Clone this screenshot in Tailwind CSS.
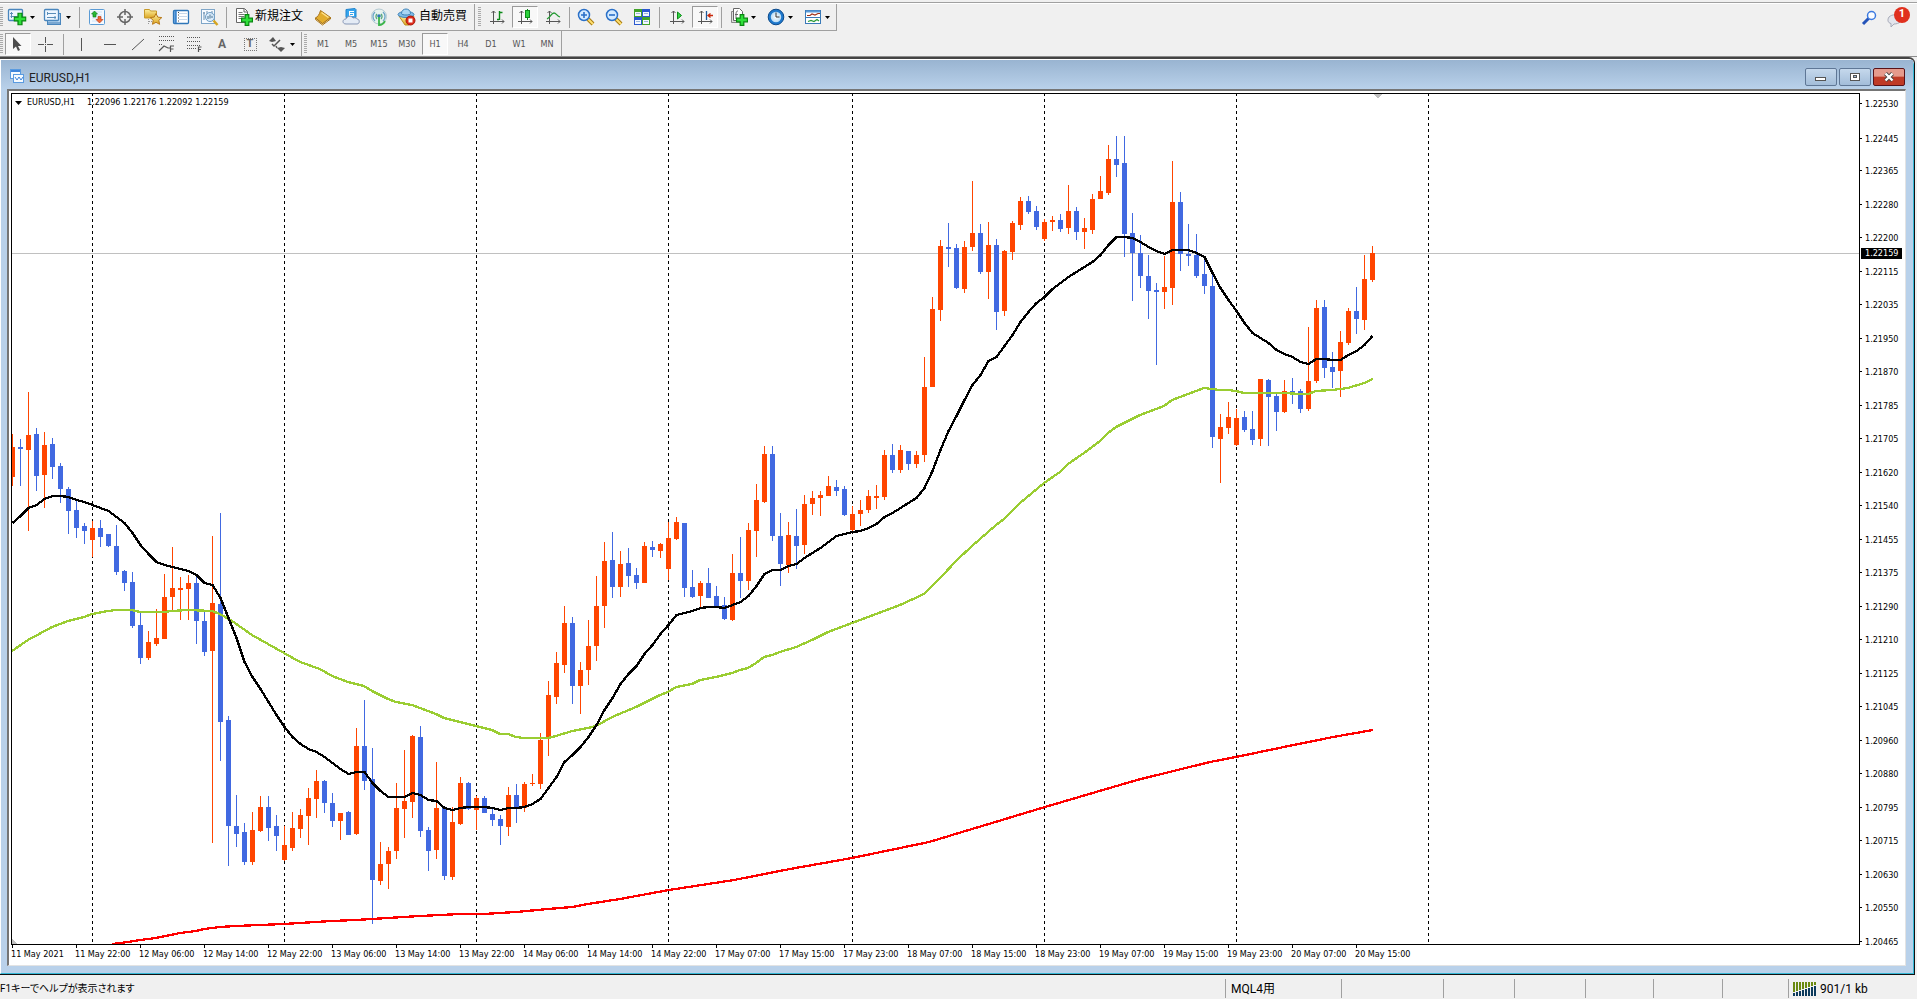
<!DOCTYPE html>
<html lang="ja">
<head>
<meta charset="utf-8">
<title>EURUSD,H1</title>
<script src="https://cdn.jsdelivr.net/npm/@tailwindcss/browser@4"></script>
</head>
<body class="flex h-screen flex-col overflow-hidden bg-[#f0f0f0] font-['Roboto','Noto_Sans_CJK_JP',sans-serif] text-xs text-black">

<svg class="absolute size-0" aria-hidden="true">
  <defs>
    <linearGradient id="gold" x1="0" y1="0" x2="0" y2="1"><stop offset="0" stop-color="#fdf0a0"/><stop offset="1" stop-color="#dca520"/></linearGradient>
    <radialGradient id="clock"><stop offset="0" stop-color="#ffffff"/><stop offset="1" stop-color="#a8d4f4"/></radialGradient>
    <symbol id="plus" viewBox="0 0 10 10"><path d="M3.5.5h3v3h3v3h-3v3h-3v-3h-3v-3h3z" fill="#2fe03a" stroke="#07870f"/></symbol>
    <symbol id="axes" viewBox="0 0 20 20"><path d="M6.500 4v13M3 14.500h14M4.500 6l2-2 2 2M15 12.500l2 2-2 2" fill="none" stroke="#555"/></symbol>
    <symbol id="lens" viewBox="0 0 20 20"><path d="M12 12l5 5" stroke="#a87a10" stroke-width="4"/><path d="M12 12l5 5" stroke="#ffe070" stroke-width="2"/><circle cx="8" cy="8" r="5.500" fill="#d5ebff" stroke="#2a70c8" stroke-width="1.500"/></symbol>
  </defs>
</svg>

<header class="border-b border-[#8c8c8c]">
  <div class="h-1 border-b border-white"><div class="h-[3px] border-b border-[#a0a0a0]"></div></div>
  <div class="flex items-stretch justify-between">
    <div class="flex h-[27px] border-b border-[#a0a0a0] bg-[#f0f0f0]" role="toolbar" aria-label="標準">
      <div class="flex w-[475px] items-center border-r border-[#a0a0a0]">
        <i class="mr-px h-[20px] w-[3px] bg-[repeating-linear-gradient(#aaa_0_1px,transparent_1px_2px)]"></i>
        <button class="flex h-6 w-9 items-center gap-[3px] pl-[3px]" aria-label="新規チャート">
          <svg class="size-5" viewBox="0 0 20 20"><rect x="1.500" y="2.500" width="14" height="11" rx="1" fill="#eef6ff" stroke="#4a86bd" stroke-width="1.300"/><path d="M4.500 5v6M3 6.500h3M3.500 9.500h7" stroke="#5a8db8" fill="none"/><use href="#plus" x="6.500" y="5.500" width="13" height="13"/></svg>
          <svg class="w-[5px]" viewBox="0 0 5 3"><path d="M0 0h5L2.500 3z"/></svg>
        </button>
        <button class="flex h-6 w-9 items-center gap-[3px] pl-[3px]" aria-label="プロファイル">
          <svg class="size-5" viewBox="0 0 20 20"><rect x="4.500" y="6.500" width="13" height="11" fill="#b6d6f2" stroke="#4a86bd"/><rect x="1.500" y="2.500" width="14" height="11" rx="1" fill="#eef6ff" stroke="#4a86bd" stroke-width="1.300"/><path d="M4.500 5v3M4 6.500h9M12 9v3M4 10.500h9" stroke="#5a8db8" fill="none"/><path d="M5 16h12" stroke="#3f79b0"/></svg>
          <svg class="w-[5px]" viewBox="0 0 5 3"><path d="M0 0h5L2.500 3z"/></svg>
        </button>
        <i class="mx-[3px] h-[21px] w-px bg-[#a0a0a0]"></i>
        <button class="flex h-6 w-7 items-center justify-center" aria-label="気配値">
          <svg class="size-5" viewBox="0 0 20 20"><rect x="2.500" y="2.500" width="15" height="15" rx="1" fill="#f4f9ff" stroke="#5b9bd5"/><path d="M5 5h10M5 8h10M5 11h10M5 14h10" stroke="#cfe2f5"/><path d="M7.500 4l3 3H9v3H6V7H4.500z" fill="#27b834" stroke="#0c7a17" stroke-width=".6"/><path d="M12.500 16L9 12.500h2v-3h3v3h2z" fill="#f26a3a" stroke="#b5300c" stroke-width=".6"/></svg>
        </button>
        <button class="flex h-6 w-7 items-center justify-center" aria-label="データウィンドウ">
          <svg class="size-5" viewBox="0 0 20 20"><circle cx="10" cy="10" r="5.500" fill="none" stroke="#666" stroke-width="1.500"/><path d="M10 2v6M10 12v6M2 10h6M12 10h6" stroke="#666" stroke-width="1.500"/></svg>
        </button>
        <button class="flex h-6 w-7 items-center justify-center" aria-label="ナビゲーター">
          <svg class="size-5" viewBox="0 0 20 20"><path d="M1.500 2.500h5l1 1.500h6v7h-12z" fill="url(#gold)" stroke="#c79a2a"/><path d="M5.500 12v5M6 14.500h3" stroke="#999" stroke-dasharray="1 1"/><path d="M13 6.500l1.800 3.600 4 .5-3 2.700.8 4-3.600-2-3.500 2 .7-4-3-2.700 4-.5z" fill="url(#gold)" stroke="#b8791a"/></svg>
        </button>
        <button class="flex h-6 w-7 items-center justify-center" aria-label="ターミナル">
          <svg class="size-5" viewBox="0 0 20 20"><rect x="2.500" y="3.500" width="15" height="13" rx="1" fill="#fff" stroke="#2f76b8" stroke-width="1.300"/><path d="M4.500 4v12" stroke="#3d86cf" stroke-width="2.500"/><path d="M8 6.500h8M8 9.500h8M8 12.500h8" stroke="#c8d8ea"/><path d="M7 5.500h1M7 8h1M7 11h1M7 14h1" stroke="#444"/></svg>
        </button>
        <button class="flex h-6 w-7 items-center justify-center" aria-label="ストラテジーテスター">
          <svg class="size-5" viewBox="0 0 20 20"><rect x="2.500" y="2.500" width="13" height="14" fill="#f6faff" stroke="#7fa6c8"/><path d="M5 5v8M8 4v3M13 4v5M4 6h2" stroke="#6a8fae"/><circle cx="11" cy="10" r="4.500" fill="#d6eafb" fill-opacity=".8" stroke="#6c9cc4"/><path d="M9 9v3M11 7.500v4M13 9v2" stroke="#47708f"/><path d="M14.500 13.500l4 4.500" stroke="#d6a520" stroke-width="2.500"/></svg>
        </button>
        <i class="mx-[3px] h-[21px] w-px bg-[#a0a0a0]"></i>
        <button class="flex h-6 w-[79px] items-center gap-[1px] pl-1 whitespace-nowrap">
          <svg class="size-5 flex-none" viewBox="0 0 20 20"><path d="M2.500 1.500h8l3 3v11h-11z" fill="#fff" stroke="#666"/><path d="M10 2v3h3" fill="none" stroke="#666"/><path d="M4.500 5.500h4M4.500 7.500h6M4.500 9.500h6M4.500 11.500h4" stroke="#777"/><use href="#plus" x="7" y="7" width="12" height="12"/></svg>
          <span class="pb-[2px]">新規注文</span>
        </button>
        <button class="flex h-6 w-7 items-center justify-center" aria-label="メタエディター">
          <svg class="size-5" viewBox="0 0 20 20"><path d="M2.500 11l7 5.500 8-6v1.500l-8 6-7-5.500z" fill="#fff4c8" stroke="#a8741a"/><path d="M7.500 3.500l10 7-8 6-7-5.500c2-1 4-3.500 5-7.500z" fill="#e2ad2e" stroke="#a8741a"/><path d="M8.500 5.500l7 5" stroke="#ffe28a" stroke-width="1.500"/></svg>
        </button>
        <button class="flex h-6 w-7 items-center justify-center" aria-label="マーケット">
          <svg class="size-5" viewBox="0 0 20 20"><path d="M5 2.500l9-1 1 1v8H5z" fill="#35a5ee" stroke="#2384cc"/><path d="M8 4v5h5V4z" fill="#fff"/><path d="M9 5.500h4M9 7.500h3" stroke="#35a5ee"/><path d="M5 17c-4 0-4-5 0-5 1-3 5-4 7-1 3-1 4 1 4 1 3 0 3 5 0 5z" fill="#e4ebf5" stroke="#8595b4"/></svg>
        </button>
        <button class="flex h-6 w-7 items-center justify-center" aria-label="シグナル">
          <svg class="size-5" viewBox="0 0 20 20"><circle cx="10" cy="9.500" r="7.500" fill="#e8f2ee" stroke="#b3c9d2"/><path d="M6 14a6 6 0 010-9M14 14a6 6 0 000-9" fill="none" stroke="#6ba5c8" stroke-width="1.300"/><path d="M8 12a3.500 3.500 0 010-5M12 12a3.500 3.500 0 000-5" fill="none" stroke="#57a77c" stroke-width="1.300"/><circle cx="10" cy="9" r="1.800" fill="#2f78b8"/><path d="M10 10v8c3 0 5-2 6-4" fill="none" stroke="#3bb54a" stroke-width="1.800"/></svg>
        </button>
        <button class="flex h-6 w-[79px] items-center gap-[2px] pl-[4px] whitespace-nowrap">
          <svg class="size-5 flex-none" viewBox="0 0 20 20"><path d="M2 9l6 9h4l5-9z" fill="url(#gold)" stroke="#bb8a20"/><ellipse cx="9" cy="7.500" rx="8" ry="3" fill="#7fbce8" stroke="#3d82b8"/><path d="M4.500 6.500c0-6 9-6 9 0 0 2-9 2-9 0z" fill="#a9d6f4" stroke="#3d82b8"/><circle cx="13.500" cy="13.500" r="4.500" fill="#dd2a1b" stroke="#a91608"/><rect x="11.500" y="11.500" width="4" height="4" fill="#fff"/></svg>
          <span class="pb-[2px]">自動売買</span>
        </button>
      </div>
      <div class="flex items-center border-r border-[#a0a0a0] pl-[3px]">
        <i class="mr-[2px] h-[20px] w-[3px] bg-[repeating-linear-gradient(#aaa_0_1px,transparent_1px_2px)]"></i>
        <button class="flex h-6 w-7 items-center justify-center" aria-label="バーチャート"><svg class="size-5" viewBox="0 0 20 20"><use href="#axes"/><path d="M12.500 4v9M10 12.500h2M13 5.500h2.500" stroke="#0c8a18" stroke-width="1.400"/></svg></button>
        <button class="mx-px flex h-[22px] w-[26px] items-center justify-center border border-r-white border-b-white border-l-[#9a9a9a] border-t-[#9a9a9a] bg-[#f8f8f8]" aria-label="ローソク足" aria-pressed="true"><svg class="size-5" viewBox="0 0 20 20"><use href="#axes"/><path d="M12.500 2v11" stroke="#0c8a18"/><rect x="10.500" y="3.500" width="4" height="7" fill="#2bd23b" stroke="#0c8a18"/></svg></button>
        <button class="flex h-6 w-7 items-center justify-center" aria-label="ラインチャート"><svg class="size-5" viewBox="0 0 20 20"><use href="#axes"/><path d="M4 12c4-2 4-6 7-6 2 0 3 3 6 4" fill="none" stroke="#239a32" stroke-width="1.300"/></svg></button>
        <i class="mx-[2px] h-[21px] w-px bg-[#a0a0a0]"></i>
        <button class="flex h-6 w-7 items-center justify-center" aria-label="ズームイン"><svg class="size-5" viewBox="0 0 20 20"><use href="#lens"/><path d="M5 8h6M8 5v6" stroke="#2a70c8" stroke-width="1.600"/></svg></button>
        <button class="flex h-6 w-7 items-center justify-center" aria-label="ズームアウト"><svg class="size-5" viewBox="0 0 20 20"><use href="#lens"/><path d="M5 8h6" stroke="#2a70c8" stroke-width="1.600"/></svg></button>
        <button class="flex h-6 w-7 items-center justify-center" aria-label="整列"><svg class="size-5" viewBox="0 0 20 20"><path d="M2 2h8v8H2zM10 10h8v8h-8z" fill="#42a32a"/><path d="M10 2h8v8h-8zM2 10h8v8H2z" fill="#2b58cf"/><path d="M3 5h6v4H3zM11 5h6v4h-6zM3 13h6v4H3zM11 13h6v4h-6z" fill="#f4f8ff"/><path d="M4 6.500h4M12 6.500h4M4 14.500h4M12 14.500h4" stroke="#9cb6d8"/></svg></button>
        <i class="mx-[3px] h-[21px] w-px bg-[#a0a0a0]"></i>
        <button class="flex h-6 w-7 items-center justify-center" aria-label="自動スクロール"><svg class="size-5" viewBox="0 0 20 20"><use href="#axes"/><path d="M10.500 5v7l4-3.500z" fill="#35d545" stroke="#0c8a18"/></svg></button>
        <button class="mx-px flex h-[22px] w-[26px] items-center justify-center border border-r-white border-b-white border-l-[#9a9a9a] border-t-[#9a9a9a] bg-[#f8f8f8]" aria-label="チャートシフト" aria-pressed="true"><svg class="size-5" viewBox="0 0 20 20"><use href="#axes"/><path d="M11.500 4v9" stroke="#1c5a9c" stroke-width="1.300"/><path d="M13 8.500h5M15.500 6.500l-2.500 2 2.500 2" fill="none" stroke="#c8280c" stroke-width="1.300"/></svg></button>
        <i class="mx-[2px] h-[21px] w-px bg-[#a0a0a0]"></i>
        <button class="flex h-6 w-[37px] items-center gap-[2px] pl-[5px]" aria-label="インディケータ">
          <svg class="size-5" viewBox="0 0 20 20"><path d="M2.500 4.500v11h9v-11z" fill="#ddd" stroke="#888"/><path d="M4.500 1.500h6l3 3v9h-9z" fill="#fff" stroke="#666"/><path d="M9 4c-2 0-2 1-2 8M6 7.500h3" fill="none" stroke="#666"/><use href="#plus" x="7" y="7" width="12" height="12"/></svg>
          <svg class="w-[5px]" viewBox="0 0 5 3"><path d="M0 0h5L2.500 3z"/></svg>
        </button>
        <button class="flex h-6 w-[37px] items-center gap-[2px] pl-[5px]" aria-label="時間足設定">
          <svg class="size-5" viewBox="0 0 20 20"><circle cx="10" cy="10" r="6.500" fill="url(#clock)" stroke="#1e78cc" stroke-width="2.500"/><circle cx="10" cy="10" r="7.800" fill="none" stroke="#0b4a8c"/><path d="M10 5.500V10h3.500" fill="none" stroke="#333"/></svg>
          <svg class="w-[5px]" viewBox="0 0 5 3"><path d="M0 0h5L2.500 3z"/></svg>
        </button>
        <button class="flex h-6 w-[38px] items-center gap-[2px] pl-[5px]" aria-label="定型チャート">
          <svg class="size-5" viewBox="0 0 20 20"><rect x="2.500" y="3.500" width="15" height="13" fill="#fff" stroke="#3a7ab8"/><path d="M3 4.500h14" stroke="#5d9bd8" stroke-width="2"/><path d="M3 10.500h14" stroke="#3a7ab8"/><path d="M4 8.500h3l2-1.500 3 1 3-1.500h2" fill="none" stroke="#a03018" stroke-width="1.200"/><path d="M5 14.500l3-1 3 1 3-2 2 1.500" fill="none" stroke="#2a9a35" stroke-width="1.200"/></svg>
          <svg class="w-[5px]" viewBox="0 0 5 3"><path d="M0 0h5L2.500 3z"/></svg>
        </button>
      </div>
    </div>
    <div class="flex items-center gap-[7px] pr-[7px]">
      <button class="size-5" aria-label="検索"><svg viewBox="0 0 20 20"><path d="M10 10l-6 6" stroke="#2453b8" stroke-width="3"/><circle cx="12.500" cy="7.500" r="4" fill="#fafcff" stroke="#3c7ae0" stroke-width="1.500"/></svg></button>
      <button class="relative h-6 w-6" aria-label="通知">
        <svg class="absolute top-1 left-0 size-5" viewBox="0 0 20 20"><path d="M3 7c3-3 9-3 12 0 2 4-2 7-7 7l-3 3v-3.500C2 13 1 10 3 7z" fill="#e3e5ec" stroke="#a7abb8"/></svg>
        <span class="absolute top-px right-0 flex size-4 items-center justify-center rounded-full bg-[#e0301e] text-[11px] font-bold text-white">1</span>
      </button>
    </div>
  </div>

  <div class="flex h-[25px] w-fit items-center border-r border-[#a0a0a0] pt-px text-[#555]" role="toolbar" aria-label="ライン等">
    <div class="flex h-full w-[302px] items-center border-r border-[#a0a0a0]">
      <i class="mr-[2px] h-[20px] w-[3px] bg-[repeating-linear-gradient(#aaa_0_1px,transparent_1px_2px)]"></i>
      <button class="flex h-[22px] w-[26px] items-center justify-center border border-r-white border-b-white border-l-[#9a9a9a] border-t-[#9a9a9a] bg-[#f8f8f8]" aria-label="カーソル" aria-pressed="true"><svg class="size-5" viewBox="0 0 20 20"><path d="M5 3v12l3-2.500 2 4.500 2-1-2-4h3.500z" fill="#4d4d4d"/></svg></button>
      <button class="flex h-6 w-7 items-center justify-center" aria-label="クロスヘア"><svg class="size-5" viewBox="0 0 20 20"><path d="M10.500 3v6M10.500 12v6M3 10.500h6M12 10.500h6M10 10.500h1" stroke="#555"/></svg></button>
      <i class="mx-[4px] h-[21px] w-px bg-[#a0a0a0]"></i>
      <button class="flex h-6 w-7 items-center justify-center" aria-label="垂直線"><svg class="size-5" viewBox="0 0 20 20"><path d="M9.500 4v13" stroke="#555"/></svg></button>
      <button class="flex h-6 w-7 items-center justify-center" aria-label="水平線"><svg class="size-5" viewBox="0 0 20 20"><path d="M4 10.500h12" stroke="#555"/></svg></button>
      <button class="flex h-6 w-7 items-center justify-center" aria-label="トレンドライン"><svg class="size-5" viewBox="0 0 20 20"><path d="M4 16L16 5" stroke="#555"/></svg></button>
      <button class="flex h-6 w-7 items-center justify-center" aria-label="フィボナッチ扇形"><svg class="size-5" viewBox="0 0 20 20"><path d="M3 2.500h15M3 6.500h15M3 10.500h3" stroke="#555" stroke-dasharray="1 1"/><path d="M3 17l5-5 4 2h2M14.500 18v-6h3.500M14.500 15h3" fill="none" stroke="#555" stroke-width="1.200"/></svg></button>
      <button class="flex h-6 w-7 items-center justify-center" aria-label="フィボナッチ"><svg class="size-5" viewBox="0 0 20 20"><path d="M3 3.500h14M3 7.500h14M3 11.500h14M3 14.500h9" stroke="#555" stroke-dasharray="1 1"/><path d="M14.500 18v-5h3M14.500 15.500h2.500" fill="none" stroke="#555" stroke-width="1.200"/></svg></button>
      <button class="h-6 w-7 text-xs font-bold text-[#666]" aria-label="テキスト">A</button>
      <button class="flex h-6 w-7 items-center justify-center" aria-label="ラベル"><span class="flex size-[13px] items-center justify-center border border-dotted border-[#777] text-[11px] font-bold text-[#666]">T</span></button>
      <button class="flex h-6 w-9 items-center gap-[3px] pl-[3px]" aria-label="矢印">
        <svg class="size-5" viewBox="0 0 20 20"><path d="M2 7l4-4 3 4-4 1zM10 14l4-1 4 1-4 4z" fill="#555"/><path d="M5 10l2 2 6-6M9 12l1 2" fill="none" stroke="#555" stroke-width="1.500"/></svg>
        <svg class="w-[5px]" viewBox="0 0 5 3"><path d="M0 0h5L2.500 3z"/></svg>
      </button>
    </div>
    <i class="mr-[2px] ml-[2px] h-[20px] w-[3px] bg-[repeating-linear-gradient(#aaa_0_1px,transparent_1px_2px)]"></i>
    <div class="flex items-center font-['DejaVu_Sans_Condensed','DejaVu_Sans',sans-serif] text-[9px]">
      <button class="h-[22px] w-7">M1</button>
      <button class="h-[22px] w-7">M5</button>
      <button class="h-[22px] w-7">M15</button>
      <button class="h-[22px] w-7">M30</button>
      <button class="mx-px h-[22px] w-[26px] border border-r-white border-b-white border-l-[#9a9a9a] border-t-[#9a9a9a] bg-[#f8f8f8]" aria-pressed="true">H1</button>
      <button class="h-[22px] w-7">H4</button>
      <button class="h-[22px] w-7">D1</button>
      <button class="h-[22px] w-7">W1</button>
      <button class="h-[22px] w-7">MN</button>
    </div>
  </div>
</header>

<main class="mr-[2px] flex min-h-0 flex-1 flex-col rounded-tr-md border-t-2 border-r border-b border-[#111] border-t-[#444]">
  <section class="flex min-h-0 flex-1 flex-col rounded-tr-md border-t border-r border-b border-l border-t-white border-r-[#35b8d6] border-b-[#35b8d6] border-l-white bg-[#b9d1ea] pr-[6px] pb-[6px] pl-[6px]">
    <div class="-mx-[6px] flex h-[29px] items-center bg-linear-to-b from-[#99b4d1] to-[#b9d1ea] pr-[8px] pl-[8px]">
      <svg class="mt-[3px] size-4" viewBox="0 0 16 16"><rect x="1.500" y="1.500" width="10" height="9" fill="#f5faff" stroke="#5a9be0"/><path d="M2 3h9" stroke="#3f86dc" stroke-width="2"/><rect x="4.500" y="6.500" width="10" height="8" fill="#f5faff" stroke="#5a9be0"/><path d="M6 9l2 3 2-3 2 3 2-3" fill="none" stroke="#3f86dc"/></svg>
      <h1 class="ml-1 flex-1 pt-[6px] text-xs leading-4 text-[#222]">EURUSD,H1</h1>
      <div class="flex gap-[2px] pt-[4px]">
        <button class="flex h-[18px] w-8 items-center justify-center rounded-[2px] border border-[#5f7796] bg-linear-to-b from-[#c5d8ec] to-[#a3bdd9]" aria-label="最小化"><svg class="w-3" viewBox="0 0 12 10"><rect x=".5" y="5.500" width="10" height="3" fill="#fff" stroke="#555"/></svg></button>
        <button class="flex h-[18px] w-8 items-center justify-center rounded-[2px] border border-[#5f7796] bg-linear-to-b from-[#c5d8ec] to-[#a3bdd9]" aria-label="元に戻す"><svg class="w-3" viewBox="0 0 12 10"><rect x="1.500" y="1.500" width="9" height="7" fill="#fff" stroke="#555"/><rect x="4.500" y="3.500" width="3" height="2" fill="#a3bdd9" stroke="#555"/></svg></button>
        <button class="flex h-[18px] w-8 items-center justify-center rounded-[2px] border border-[#5a1218] bg-linear-to-b from-[#e59a8c] from-45% to-[#bf3a26] to-50%" aria-label="閉じる"><svg class="w-3" viewBox="0 0 12 10"><path d="M2.500 1.500l7 7M9.500 1.500l-7 7" stroke="#444" stroke-width="4"/><path d="M2.500 1.500l7 7M9.500 1.500l-7 7" stroke="#fff" stroke-width="2.400"/></svg></button>
      </div>
    </div>

    <div class="mr-px mb-px grid min-h-0 flex-1 grid-cols-[minmax(0,1fr)_45px] grid-rows-[minmax(0,1fr)_20px] border-t-2 border-r border-b border-l-2 border-[#e3e3e3] border-t-[#757575] border-l-[#757575] bg-white pt-[2px] pl-[2px] font-['DejaVu_Sans_Condensed','DejaVu_Sans',sans-serif] text-[9px] leading-[11px]">
      <div class="relative min-h-0 overflow-hidden border border-black">
        <svg id="plot" class="absolute inset-0 h-full w-full" shape-rendering="crispEdges" role="img" aria-label="EURUSD H1"></svg>
        <div class="absolute top-[3px] left-[3px] flex items-center whitespace-pre">
          <svg class="mr-[5px] w-[7px]" viewBox="0 0 7 4"><path d="M0 0h7L3.500 4z"/></svg>
          <span class="w-[60px]">EURUSD,H1</span><span>1.22096 1.22176 1.22092 1.22159</span>
        </div>
      </div>
      <div class="relative flex min-h-0 flex-col pt-[5px] pb-[9px]">
        <div id="prices" class="flex min-h-0 flex-1 flex-col"></div>
        <span class="absolute top-[155px] left-px h-[11px] w-[41px] bg-black pl-1 text-white">1.22159</span>
      </div>
      <div id="times" class="col-span-2 flex overflow-hidden"></div>
    </div>
  </section>
</main>

<footer class="flex h-6 items-center pt-[2px] whitespace-nowrap">
  <span class="flex-1 pt-px text-[10px] [font-feature-settings:'palt']">F1キーでヘルプが表示されます</span>
  <span class="flex h-[19px] w-[116px] items-center border-l border-[#a0a0a0] pt-px pl-[5px]">MQL4用</span>
  <span class="h-[19px] w-[102px] border-l border-[#a0a0a0]"></span>
  <span class="h-[19px] w-[71px] border-l border-[#a0a0a0]"></span>
  <span class="h-[19px] w-[71px] border-l border-[#a0a0a0]"></span>
  <span class="h-[19px] w-[68px] border-l border-[#a0a0a0]"></span>
  <span class="h-[19px] w-[69px] border-l border-[#a0a0a0]"></span>
  <span class="h-[19px] w-[66px] border-l border-[#a0a0a0]"></span>
  <span class="flex h-[19px] w-[129px] items-center gap-[3px] border-l border-[#a0a0a0] pt-px pl-1">
    <svg class="h-[14px] w-6" viewBox="0 0 24 14"><path d="M1 0v10M4 0v9M7 0v8M10 0v7M13 0v6M16 0v5M19 0v4M22 0v3" stroke="#6a8a10" stroke-width="2"/><path d="M1 11v3M4 10v4M7 9v5M10 8v6M13 7v7M16 6v8M19 5v9M22 4v10" stroke="#0c3a5c" stroke-width="2"/></svg>
    <span>901/1 kb</span>
  </span>
</footer>

<script>
// One row per hour: high, open/close top, open/close bottom, low, direction (1 up, 0 down).
const bars = [
[434,447,477,486,1],[439,447,449,486,0],[392,435,450,531,1],[428,434,476,491,0],[432,445,475,508,1],[438,444,467,479,0],[463,466,489,503,0],[487,489,511,534,0],[500,510,528,538,0],[523,526,531,544,0],
[521,528,540,557,1],[520,528,537,547,0],[534,534,546,547,0],[525,546,572,575,0],[570,571,583,591,0],[572,582,626,628,0],[612,625,658,664,0],[631,642,658,660,1],[609,638,644,646,1],[574,597,639,639,1],
[547,588,597,612,1],[577,588,590,620,1],[575,583,589,620,1],[575,583,621,644,0],[611,621,652,656,0],[536,603,651,843,1],[513,604,722,761,0],[716,720,826,866,0],[795,826,834,847,0],[823,832,862,865,0],
[812,830,862,865,1],[796,807,831,832,1],[796,807,828,841,0],[815,826,836,851,0],[826,845,860,861,1],[812,828,848,851,1],[809,815,829,838,1],[788,798,816,845,1],[770,781,799,818,1],[780,781,803,813,0],
[793,803,821,827,0],[813,813,821,840,1],[811,812,835,835,0],[728,746,834,835,1],[700,746,781,790,0],[748,779,880,924,0],[842,864,881,885,1],[847,851,864,889,1],[783,808,851,859,1],[750,801,809,838,1],
[735,736,802,818,1],[726,737,831,837,0],[827,830,851,871,0],[762,808,850,859,1],[807,808,876,880,0],[807,822,877,880,1],[777,783,824,825,1],[782,783,809,810,0],[796,798,810,830,1],[796,798,813,813,0],
[808,814,820,826,0],[815,819,826,845,0],[787,795,827,836,1],[784,795,808,823,0],[782,784,808,812,1],[774,783,784,786,1],[733,740,784,789,1],[681,695,739,756,1],[652,663,697,704,1],[606,623,665,673,1],
[617,623,686,704,0],[662,670,686,714,1],[620,646,670,685,1],[576,606,646,661,1],[542,561,606,628,1],[532,560,587,598,0],[551,564,587,597,1],[548,563,576,587,0],[568,575,583,589,0],[542,546,583,583,1],
[541,547,550,557,0],[543,544,551,558,1],[522,538,569,580,1],[517,522,539,540,1],[523,523,588,597,0],[570,587,597,598,0],[581,583,596,609,1],[568,583,598,598,0],[586,596,606,607,0],[597,605,619,620,0],
[554,573,620,621,1],[537,573,581,598,0],[523,530,581,590,1],[484,500,531,557,1],[446,454,502,503,1],[446,454,536,541,0],[513,536,564,586,0],[522,535,565,573,1],[509,536,546,569,0],[495,504,545,554,1],
[491,498,504,515,1],[491,495,498,516,1],[476,486,496,496,1],[480,487,491,496,0],[486,489,515,516,0],[506,514,530,531,1],[500,510,514,526,1],[490,496,510,513,1],[485,496,498,509,1],[450,455,497,500,1],
[444,455,470,473,0],[445,450,470,473,1],[451,451,464,470,0],[451,455,464,468,1],[357,387,455,462,1],[297,309,387,387,1],[240,246,310,321,1],[223,247,249,267,0],[244,248,288,289,0],[241,247,289,293,1],
[181,233,247,251,1],[224,233,272,274,0],[222,245,272,299,1],[239,245,312,330,0],[250,251,311,316,1],[221,223,252,260,1],[197,201,225,230,1],[196,201,212,214,0],[206,211,227,230,0],[219,222,239,241,1],
[216,220,222,231,1],[214,220,229,232,0],[185,211,228,234,1],[207,211,232,240,0],[218,228,232,249,1],[194,199,230,234,1],[176,191,199,199,1],[145,159,193,195,1],[136,159,165,177,0],[136,163,234,257,0],
[213,233,253,301,0],[235,253,276,288,0],[255,276,291,319,0],[283,290,292,365,0],[256,287,292,309,1],[161,202,288,305,1],[192,202,254,271,0],[224,254,256,266,0],[234,255,276,278,0],[256,274,286,294,0],
[274,286,437,448,0],[414,427,439,483,1],[402,417,428,434,1],[409,418,445,446,1],[411,417,430,432,0],[411,429,440,445,0],[379,379,439,446,1],[379,380,397,446,0],[394,396,412,431,0],[380,391,412,413,1],
[378,391,393,404,0],[389,391,409,413,0],[327,381,409,411,1],[300,308,381,383,1],[300,307,368,378,0],[352,367,372,388,0],[331,342,371,397,1],[308,311,343,345,1],[287,311,319,334,0],[255,279,320,330,1],
[246,253,280,282,1]];

// Short average: one value per bar.
const fast = [523,516,508,505,499,496,496,497,500,502,505,508,511,517,523,533,545,554,562,565,567,569,571,575,583,585,598,618,638,662,677,689,702,715,727,737,744,749,752,757,763,769,774,772,772,783,791,797,797,797,793,795,800,801,808,810,808,807,807,807,808,810,808,808,807,804,799,788,777,762,755,747,737,725,710,698,684,674,666,654,645,634,625,615,613,611,608,607,607,608,605,602,596,586,574,570,570,566,564,558,553,548,542,536,534,532,531,528,524,517,513,508,503,498,488,471,450,431,416,400,385,375,361,357,346,335,322,312,303,297,289,283,277,272,267,262,255,245,237,237,238,242,247,251,254,250,250,250,253,257,273,288,300,311,323,333,338,343,350,354,357,362,364,359,359,360,360,355,351,345,336];
const mid = "12,651 28,640 52,627 68,621 84,617 92,614 108,611 116,610 132,610 140,612 164,612 172,611 188,610 212,611 220,614 232,621 252,635 268,644 284,653 300,662 320,669 332,676 348,682 364,686 372,691 388,699 396,702 412,705 436,714 444,718 476,726 492,730 500,734 508,734 516,737 524,738 548,738 556,736 572,731 588,728 596,726 612,717 636,707 660,695 668,692 676,687 692,684 700,680 716,677 724,675 732,673 740,670 748,668 756,663 764,657 772,655 780,652 796,647 812,640 828,632 852,623 876,614 900,605 924,594 940,578 958,559 972,546 996,525 1004,519 1020,503 1044,483 1060,472 1068,464 1084,453 1100,441 1108,433 1116,427 1124,423 1140,415 1164,406 1172,400 1180,397 1204,388 1220,390 1228,390 1236,391 1244,393 1284,393 1300,394 1308,394 1316,391 1332,390 1340,389 1348,388 1364,383 1373,379";
const slow = "112,944 128,942 140,940 156,938 180,933 196,931 204,929 220,927 236,926 260,925 284,924 300,923 332,921 356,920 372,919 420,916 460,914 484,914 516,912 548,909 572,907 588,904 620,899 669,890 734,880 790,869 852,858 929,842 1045,807 1137,780 1210,762 1236,757 1284,747 1333,737 1373,730";

let s = '<g transform="translate(-12 -94)">';
s += '<path d="M12 939v5h5zM1373 94h9l-4 5z" fill="#c0c0c0"/>';
s += '<path d="M12 253.5H4000" stroke="#c0c0c0"/>';
for (const x of [92, 284, 476, 668, 852, 1044, 1236, 1428])
  s += `<path d="M${x}.5 93V4000" stroke="#000" stroke-dasharray="3 3"/>`;
bars.forEach(([h, a, b, l, up], k) => {
  const x = 12 + 8 * k, c = up ? '#ff4500' : '#4169e1';
  s += `<path d="M${x} ${h}h1V${l}h-1zM${x - 2} ${a}h5V${b}h-5z" fill="${c}"/>`;
});
s += `<g fill="none" stroke-width="2.300"><polyline points="${slow}" stroke="#f00"/>`;
s += `<polyline points="${mid}" stroke="#9acd32"/>`;
s += `<polyline points="${fast.map((y, k) => (12.5 + 8 * k) + ',' + y).join(' ')}" stroke="#000"/></g></g>`;
document.getElementById('plot').innerHTML = s;

let price = 122530, rows = '';
for (let i = 0; i < 26; i++) {
  const wide = i % 2 === 0;
  const size = i === 25 ? 'h-0 flex-none' : wide ? 'flex-[85_1_0px] min-h-0' : 'flex-[80_1_0px] min-h-0';
  rows += `<div class="${size}"><div class="flex items-start gap-[3px]"><i class="mt-[5px] h-px w-[2px] bg-black"></i><span class="pt-px">${(price / 1e5).toFixed(5)}</span></div></div>`;
  price -= wide ? 85 : 80;
}
document.getElementById('prices').innerHTML = rows;

document.getElementById('times').innerHTML = ['11 May 2021','11 May 22:00','12 May 06:00','12 May 14:00','12 May 22:00','13 May 06:00','13 May 14:00','13 May 22:00','14 May 06:00','14 May 14:00','14 May 22:00','17 May 07:00','17 May 15:00','17 May 23:00','18 May 07:00','18 May 15:00','18 May 23:00','19 May 07:00','19 May 15:00','19 May 23:00','20 May 07:00','20 May 15:00']
  .map(t => `<div class="w-16 flex-none whitespace-nowrap"><i class="mb-px ml-px block h-[3px] w-px bg-black"></i>${t}</div>`).join('');
</script>
</body>
</html>
